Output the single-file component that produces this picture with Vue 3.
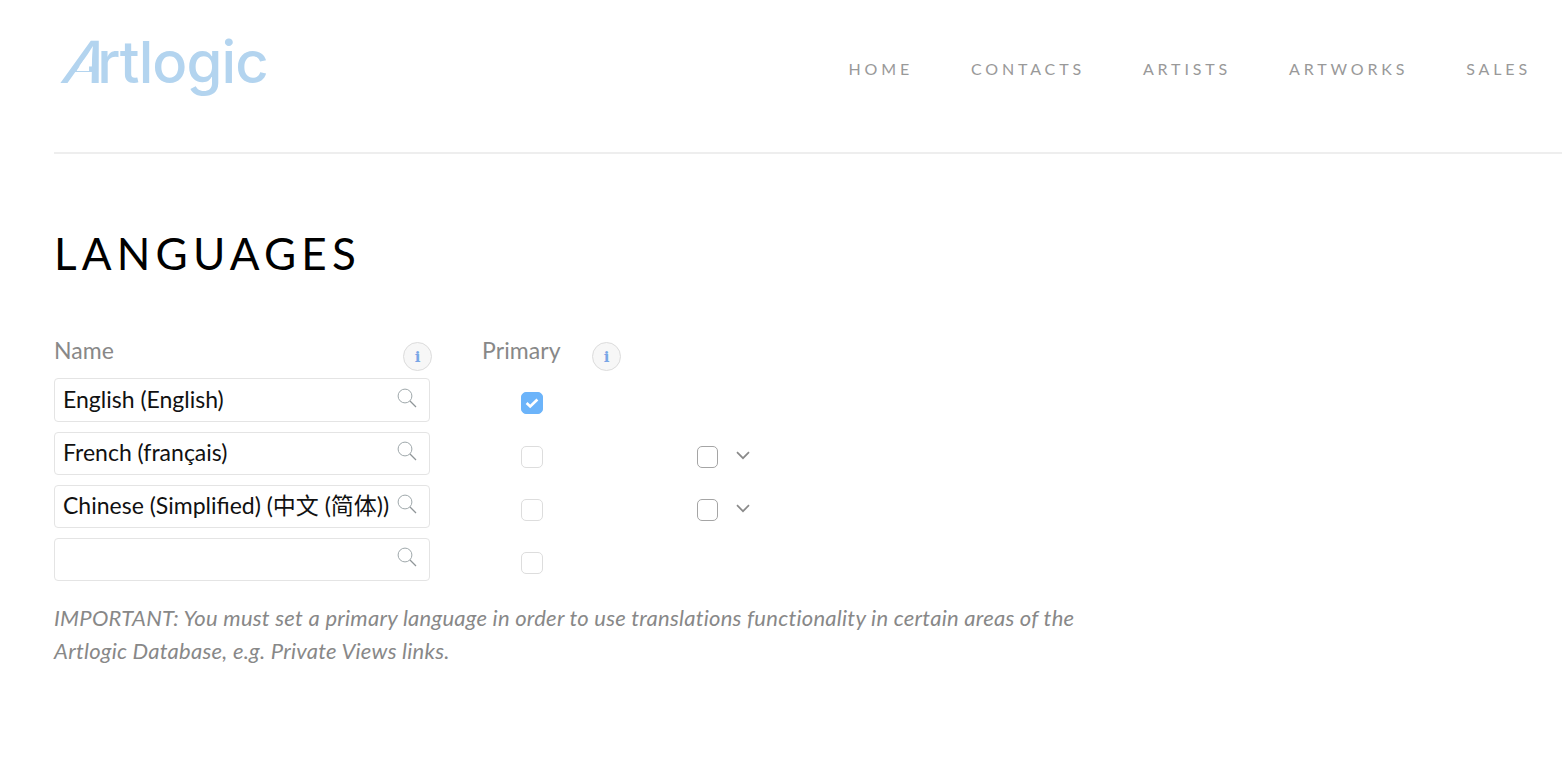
<script setup>
const nav = ['HOME', 'CONTACTS', 'ARTISTS', 'ARTWORKS', 'SALES']
const rows = [
  { value: 'English (English)', primary: true, extra: false, tall: true },
  { value: 'French (français)', primary: false, extra: true },
  { value: 'Chinese (Simplified) (中文 (简体))', primary: false, extra: true },
  { value: '', primary: false, extra: false },
]
</script>

<template>
  <div class="page">
    <header class="header">
      <div class="logo"><span class="logo-a">A</span>rtlogic</div>
      <nav class="nav">
        <a v-for="item in nav" :key="item" class="nav-item">{{ item }}</a>
      </nav>
    </header>

    <main class="content">
      <h1 class="title">LANGUAGES</h1>

      <div class="labels">
        <span class="label name-label">Name</span>
        <span class="info">i</span>
        <span class="label primary-label">Primary</span>
        <span class="info">i</span>
      </div>

      <div class="rows">
        <div v-for="row in rows" :key="row.value" class="row">
          <div class="input" :class="{ tall: row.tall }">
            <span class="input-text">{{ row.value }}</span>
            <svg class="search" width="20" height="20" viewBox="0 0 20 20" fill="none">
              <circle cx="8" cy="8" r="6.9" stroke="#9fa8ab" stroke-width="1" />
              <path d="M13 13l6 6" stroke="#8f9598" stroke-width="1.3" />
            </svg>
          </div>
          <div class="primary-cell">
            <span class="check" :class="{ on: row.primary }">
              <svg v-if="row.primary" width="14" height="12" viewBox="0 0 14 12" fill="none">
                <path d="M1.6 6l3.6 3.4 7.2-6.9" stroke="#fff" stroke-width="2.7" />
              </svg>
            </span>
          </div>
          <template v-if="row.extra">
            <span class="check dark"></span>
            <svg class="chevron" width="14" height="9" viewBox="0 0 14 9" fill="none">
              <path d="M1 1.2l6 6 6-6" stroke="#8a8a8a" stroke-width="1.7" />
            </svg>
          </template>
        </div>
      </div>

      <p class="note">IMPORTANT: You must set a primary language in order to use translations functionality in certain areas of the Artlogic Database, e.g. Private Views links.</p>
    </main>
  </div>
</template>

<style>
html, body { margin: 0; background: #fff; }
</style>

<style scoped>
.page {
  padding-left: 54px;
  font-family: "Lato", "Noto Sans CJK SC", sans-serif;
  color: #000;
}
.header {
  height: 152px;
  border-bottom: 2px solid #eeeeee;
  display: flex;
  justify-content: space-between;
  align-items: flex-start;
  padding-right: 31px;
}
.logo {
  margin: 27px 0 0 5px;
  font-family: "Inter", sans-serif;
  font-size: 58px;
  line-height: 70px;
  font-weight: 500;
  letter-spacing: -0.9px;
  color: #b3d4ef;
}
.logo-a {
  display: inline-block;
  position: relative;
  transform: skewX(-20deg);
  transform-origin: 50% 80%;
  margin-right: -2px;
}
.logo-a::after {
  content: "";
  position: absolute;
  left: 11px;
  top: 33px;
  width: 13px;
  height: 11px;
  background: #fff;
  transform: skewX(20deg);
  clip-path: polygon(7.5px 0, 100% 0, 100% 100%, 0 100%);
}
.nav {
  display: flex;
  gap: 58px;
  margin-top: 59px;
}
.nav-item {
  font-size: 16px;
  line-height: 20px;
  letter-spacing: 3.85px;
  color: #999;
}
.title {
  margin: 0;
  padding-top: 72px;
  font-size: 44px;
  line-height: 54px;
  font-weight: 400;
  letter-spacing: 5.2px;
  color: #000;
}
.labels {
  display: flex;
  align-items: flex-start;
  height: 41px;
  margin-top: 57px;
}
.label {
  font-size: 23px;
  line-height: 26px;
  letter-spacing: 0.1px;
  color: #888;
}
.name-label { width: 349px; margin-top: 0; }
.primary-label { width: 78px; margin-left: 50px; margin-right: 32px; }
.info {
  width: 27px;
  height: 27px;
  margin-top: 5px;
  border: 1px solid #dcdcdc;
  border-radius: 50%;
  background: #f7f7f7;
  display: flex;
  align-items: center;
  justify-content: center;
  font-family: "DejaVu Serif", serif;
  font-weight: 700;
  font-size: 15px;
  color: #78a6e6;
}
.rows {
  display: flex;
  flex-direction: column;
  gap: 10px;
}
.row {
  display: flex;
  align-items: center;
}
.input {
  height: 41px;
  border: 1px solid #e4e4e4;
  border-radius: 4px;
  display: flex;
  align-items: center;
  justify-content: space-between;
  padding: 0 12px 0 8px;
  box-sizing: content-box;
  width: 354px;
  font-size: 23px;
  color: #111;
}
.input.tall { height: 42px; }
.input-text { white-space: nowrap; margin-top: -3px; line-height: 26px; }
.search { margin-top: -5px; flex: none; }
.primary-cell {
  width: 176px;
  padding-left: 91px;
  display: flex;
}
.check {
  width: 20px;
  height: 20px;
  margin-top: 6px;
  border: 1px solid #dddddd;
  border-radius: 5px;
  display: flex;
  align-items: center;
  justify-content: center;
  flex: none;
}
.check.on {
  background: #6cb4fa;
  border-color: #6cb4fa;
}
.check.dark {
  width: 19px;
  border-color: #a5a5a5;
}
.chevron { margin: 4px 0 0 18px; }
.note {
  margin: 20px 0 0;
  width: 1030px;
  font-size: 22px;
  line-height: 33px;
  letter-spacing: 0.25px;
  font-style: italic;
  color: #888;
}
</style>
